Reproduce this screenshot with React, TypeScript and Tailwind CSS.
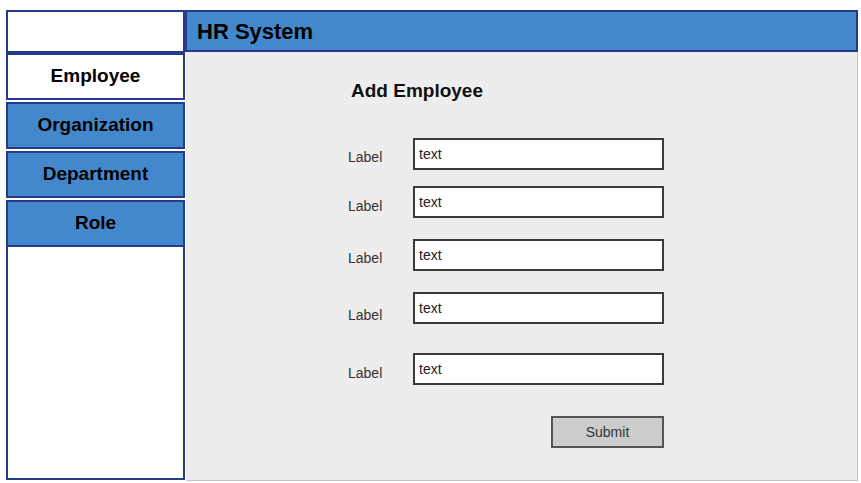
const menu = [
  { name: "Employee", active: true, gap: "" },
  { name: "Organization", active: false, gap: "mt-[2px]" },
  { name: "Department", active: false, gap: "mt-[2px]" },
  { name: "Role", active: false, gap: "mt-[2px]" },
];

// mt = space above the input, lab = where the label sits against the input top
const fields = [
  { id: 1, mt: "mt-[0px]", lab: "mt-[9px]" },
  { id: 2, mt: "mt-[16px]", lab: "mt-[10px]" },
  { id: 3, mt: "mt-[21px]", lab: "mt-[9px]" },
  { id: 4, mt: "mt-[21px]", lab: "mt-[13px]" },
  { id: 5, mt: "mt-[28px]", lab: "mt-[10px]" },
];

export default function App() {
  return (
    <div
      className="w-[861px] h-[483px] bg-white pt-[10px] pl-[6px] flex"
      style={{ fontFamily: '"Liberation Sans", Arial, sans-serif' }}
    >
      {/* sidebar */}
      <aside className="w-[179px] h-[470px] flex flex-col">
        <div className="h-[43px] border-2 border-[#263b8c] bg-white" />

        {menu.map((item) => (
          <div
            key={item.name}
            className={`${item.gap} h-[47px] border-2 border-[#263b8c] flex items-center justify-center text-[19px] font-bold text-black ${
              item.active ? "bg-white" : "bg-[#4388cc]"
            }`}
          >
            {item.name}
          </div>
        ))}

        <div className="flex-1 border-2 border-t-0 border-[#263b8c] bg-white" />
      </aside>

      {/* main */}
      <div className="w-[673px] h-[471px] flex flex-col">
        <header className="h-[42px] border-2 border-[#263b8c] bg-[#4388cc] flex items-center pl-[10px]">
          <h1 className="text-[22px] font-bold text-black">HR System</h1>
        </header>

        <main
          className="flex-1 ml-px bg-[#ededed] border-r border-b border-[#c4c4c4] pl-[162px] pt-[26px]"
          style={{ fontFamily: '"Comic Sans MS", "Liberation Sans", sans-serif' }}
        >
          <h2 className="text-[19px] font-bold text-[#111] pl-[3px] leading-[26px]">
            Add Employee
          </h2>

          <div className="mt-[34px] flex flex-col">
            {fields.map((f) => (
              <div key={f.id} className={`${f.mt} flex items-start`}>
                <span className={`w-[65px] text-[14px] leading-[20px] text-[#333] ${f.lab}`}>
                  Label
                </span>
                <div className="w-[251px] h-[32px] bg-white border-2 border-[#3a3a3a] px-[4px] pt-[5px] text-[14px] text-[#222] leading-[18px]">
                  text
                </div>
              </div>
            ))}

            <div className="mt-[31px] pl-[203px]">
              <button className="w-[113px] h-[32px] bg-[#cccccc] border-2 border-[#555] text-[14px] text-[#333]">
                Submit
              </button>
            </div>
          </div>
        </main>
      </div>
    </div>
  );
}
